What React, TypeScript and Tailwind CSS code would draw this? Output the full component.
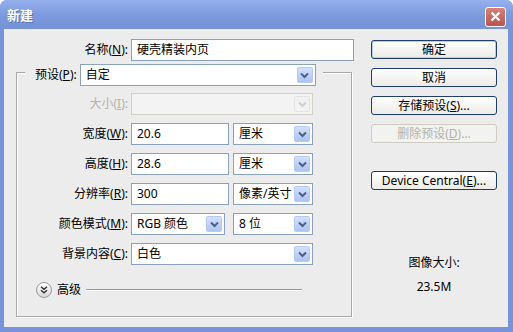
import React from "react";

const font = { fontFamily: '"Noto Sans", "Noto Sans CJK SC", sans-serif' };

function Arrow({ disabled }: { disabled?: boolean }) {
  return (
    <div
      className={
        disabled
          ? "w-[16px] h-[16px] rounded-[2px] border border-[#e3e3e3] bg-[#f2f2f2] flex items-center justify-center"
          : "w-[16px] h-[16px] rounded-[2px] border border-[#b7c9f2] bg-gradient-to-b from-[#d3e0fd] to-[#adc3f3] flex items-center justify-center"
      }
    >
      <svg width="9" height="7" viewBox="0 0 9 7">
        <path
          d="M1 1.5 L4.5 5 L8 1.5"
          fill="none"
          stroke={disabled ? "#d0d0d0" : "#4d6185"}
          strokeWidth="2"
        />
      </svg>
    </div>
  );
}

function Select({ w, value, disabled }: { w: string; value?: string; disabled?: boolean }) {
  return (
    <div
      className={`${w} h-[22px] flex items-center border ${
        disabled ? "border-[#d3d1c6] bg-[#f3f3f3]" : "border-[#8aa2c0] bg-white"
      } pl-[5px] pr-[2px]`}
    >
      <span className="flex-1 text-[12px] text-black leading-none whitespace-nowrap">{value}</span>
      <Arrow disabled={disabled} />
    </div>
  );
}

function Input({ w, value }: { w: string; value: string }) {
  return (
    <div className={`${w} h-[22px] flex items-center border border-[#8aa2c0] bg-white pl-[5px]`}>
      <span className="text-[12px] text-black leading-none whitespace-nowrap">{value}</span>
    </div>
  );
}

function Label({ children, disabled }: { children: React.ReactNode; disabled?: boolean }) {
  return (
    <div
      className={`w-[111px] text-right text-[12px] whitespace-nowrap leading-none ${
        disabled ? "text-[#b4b2a8]" : "text-black"
      }`}
    >
      {children}
    </div>
  );
}

function Btn({
  children,
  def,
  disabled,
}: {
  children: React.ReactNode;
  def?: boolean;
  disabled?: boolean;
}) {
  return (
    <div
      className={`w-[126px] h-[19px] rounded-[3px] border flex items-center justify-center text-[12px] leading-none whitespace-nowrap ${
        disabled
          ? "border-[#cfcdc3] bg-[#f2f2f0] text-[#b4b2a8]"
          : def
          ? "border-[#1e3c72] bg-gradient-to-b from-[#ffffff] to-[#ecebe6] text-black shadow-[inset_0_0_0_1px_#b8cdf6]"
          : "border-[#1e3c72] bg-gradient-to-b from-[#ffffff] to-[#ecebe6] text-black"
      }`}
    >
      {children}
    </div>
  );
}

export default function App() {
  return (
    <div className="w-[513px] h-[332px] bg-white" style={font}>
      <div className="w-[513px] h-[332px] flex flex-col bg-[#7794db] rounded-t-[7px] overflow-hidden">
        {/* title bar */}
        <div className="h-[29px] flex items-center pl-[7px] pr-[7px] bg-gradient-to-b from-[#96b0ee] via-[#7d9ade] to-[#7591d8] shrink-0">
          <span className="text-white font-bold text-[13px] leading-none pt-[2px] [text-shadow:1px_1px_0_#5a72b0]">
            新建
          </span>
          <div className="ml-auto w-[21px] h-[20px] rounded-[3px] border border-white bg-gradient-to-b from-[#d7817a] to-[#b9544f] flex items-center justify-center mt-[4px]">
            <svg width="11" height="11" viewBox="0 0 11 11">
              <path d="M1.5 1.5 L9.5 9.5 M9.5 1.5 L1.5 9.5" stroke="white" strokeWidth="2.2" />
            </svg>
          </div>
        </div>
        {/* body */}
        <div className="flex-1 ml-[4px] mr-[5px] mb-[5px] bg-[#ececec] flex">
          {/* left column */}
          <div className="ml-[12px] w-[338px] flex flex-col pt-[10px]">
            <div className="flex items-center">
              <div className="w-[112px] text-right text-[12px] leading-none text-black whitespace-nowrap">
                名称(<u>N</u>):
              </div>
              <div className="ml-[3px]">
                <Input w="w-[223px]" value="硬壳精装内页" />
              </div>
            </div>
            {/* group box */}
            <div className="mt-[11px] w-[336px] h-[245px] border border-[#a9a9a9] shadow-[inset_1px_1px_0_#ffffff,1px_1px_0_#ffffff] flex flex-col">
              <div className="-mt-[9px] ml-[8px] self-start bg-[#ececec] pl-[10px] pr-[7px] flex items-center">
                <span className="text-[12px] leading-none text-black whitespace-nowrap">
                  预设(<u>P</u>):
                </span>
                <div className="ml-[3px]">
                  <Select w="w-[236px]" value="自定" />
                </div>
              </div>
              <div className="mt-[7px] flex flex-col gap-[8px]">
                <div className="flex items-center">
                  <Label disabled>
                    大小(<u>I</u>):
                  </Label>
                  <div className="ml-[3px]">
                    <Select w="w-[182px]" disabled />
                  </div>
                </div>
                <div className="flex items-center">
                  <Label>
                    宽度(<u>W</u>):
                  </Label>
                  <div className="ml-[3px] flex gap-[4px]">
                    <Input w="w-[98px]" value="20.6" />
                    <Select w="w-[80px]" value="厘米" />
                  </div>
                </div>
                <div className="flex items-center">
                  <Label>
                    高度(<u>H</u>):
                  </Label>
                  <div className="ml-[3px] flex gap-[4px]">
                    <Input w="w-[98px]" value="28.6" />
                    <Select w="w-[80px]" value="厘米" />
                  </div>
                </div>
                <div className="flex items-center">
                  <Label>
                    分辨率(<u>R</u>):
                  </Label>
                  <div className="ml-[3px] flex gap-[4px]">
                    <Input w="w-[98px]" value="300" />
                    <Select w="w-[80px]" value="像素/英寸" />
                  </div>
                </div>
                <div className="flex items-center">
                  <Label>
                    颜色模式(<u>M</u>):
                  </Label>
                  <div className="ml-[3px] flex gap-[8px]">
                    <Select w="w-[94px]" value="RGB 颜色" />
                    <Select w="w-[80px]" value="8 位" />
                  </div>
                </div>
                <div className="flex items-center">
                  <Label>
                    背景内容(<u>C</u>):
                  </Label>
                  <div className="ml-[3px]">
                    <Select w="w-[182px]" value="白色" />
                  </div>
                </div>
              </div>
              {/* advanced */}
              <div className="mt-[17px] ml-[19px] flex items-center">
                <div className="w-[16px] h-[16px] rounded-full border border-[#9a9a9a] bg-gradient-to-b from-[#ffffff] to-[#d8d8d8] flex items-center justify-center">
                  <svg width="8" height="8" viewBox="0 0 8 8">
                    <path d="M1 0.8 L4 3.3 L7 0.8 M1 4.3 L4 6.8 L7 4.3" fill="none" stroke="#333" strokeWidth="1.4" />
                  </svg>
                </div>
                <span className="ml-[5px] text-[12px] leading-none text-black">高级</span>
                <div className="ml-[5px] w-[216px] h-[2px] border-t border-[#9a9a9a] border-b-white border-b" />
              </div>
            </div>
          </div>
          {/* right column */}
          <div className="ml-[17px] w-[126px] flex flex-col pt-[11px]">
            <div className="flex flex-col gap-[9px]">
              <Btn def>确定</Btn>
              <Btn>取消</Btn>
              <Btn>
                存储预设(<u>S</u>)...
              </Btn>
              <Btn disabled>
                删除预设(<u>D</u>)...
              </Btn>
            </div>
            <div className="mt-[28px]">
              <Btn>
                Device Central(<u>E</u>)...
              </Btn>
            </div>
            <div className="mt-[67px] flex flex-col items-center text-[12px] leading-none text-black">
              <span>图像大小:</span>
              <span className="mt-[12px]">23.5M</span>
            </div>
          </div>
        </div>
      </div>
    </div>
  );
}
